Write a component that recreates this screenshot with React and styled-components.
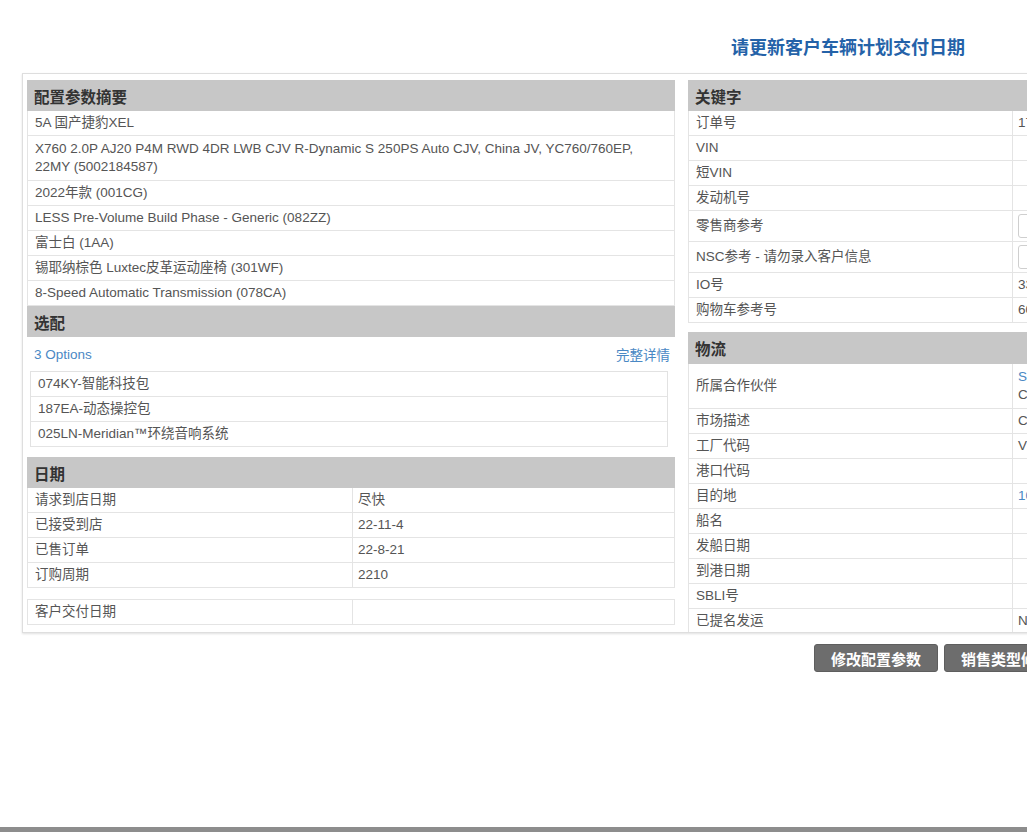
import React from "react";
import styled, { createGlobalStyle } from "styled-components";

const GlobalStyle = createGlobalStyle`
  *, *::before, *::after { box-sizing: border-box; }
  html, body { margin: 0; padding: 0; overflow: hidden; background: #fff; }
  body {
    font-family: "Liberation Sans", "Noto Sans CJK SC", Arial, sans-serif;
    font-size: 13.5px;
    color: #555;
  }
`;

const Page = styled.div`
  width: 1400px;
`;

const Main = styled.div`
  min-height: 827px;
  padding-left: 22px;
`;

const TopBar = styled.div`
  height: 73px;
  width: 943px;
  display: flex;
  justify-content: flex-end;
  align-items: flex-start;
  padding-top: 37px;
`;

const TopLink = styled.a`
  font-size: 18px;
  font-weight: bold;
  line-height: 22px;
  color: #2462a8;
  text-decoration: none;
  cursor: pointer;
`;

const Panel = styled.div`
  width: 1319px;
  height: 560px;
  overflow: hidden;
  border: 1px solid #dedede;
  box-shadow: 0 1px 2px rgba(0, 0, 0, 0.12);
  padding: 6px 4px;
  display: flex;
  align-items: flex-start;
  gap: 13px;
  background: #fff;
`;

const Column = styled.div`
  width: 648px;
  flex-shrink: 0;
  display: flex;
  flex-direction: column;
  & > * {
    flex-shrink: 0;
  }
`;

const SectionHeader = styled.div`
  height: ${(p) => p.$h || 31}px;
  background: #c7c7c7;
  color: #333;
  font-size: 15.5px;
  font-weight: bold;
  display: flex;
  align-items: center;
  padding: 0 7px;
  margin-top: ${(p) => p.$mt || 0}px;
`;

const Table = styled.div`
  border-left: 1px solid #e4e4e4;
  border-right: 1px solid #e4e4e4;
  margin-top: ${(p) => p.$mt || 0}px;
  ${(p) => (p.$boxed ? "border-top: 1px solid #e4e4e4;" : "")}
`;

const Row = styled.div`
  display: flex;
  align-items: center;
  min-height: ${(p) => p.$h || 25}px;
  padding: 0 7px;
  line-height: 18px;
  border-bottom: 1px solid #e4e4e4;
`;

const OptionsBar = styled.div`
  height: 34px;
  display: flex;
  align-items: center;
  justify-content: space-between;
  padding: 0 5px 0 7px;
`;

const LinkText = styled.a`
  color: #4a88c4;
  text-decoration: none;
  cursor: pointer;
`;

const OptionsBox = styled.div`
  margin: 0 7px 0 3px;
  border: 1px solid #e2e2e2;
  border-bottom: none;
`;

const KVRow = styled.div`
  display: grid;
  grid-template-columns: ${(p) => p.$split || 324}px 1fr;
  min-height: ${(p) => p.$h || 25}px;
  border-bottom: 1px solid #e4e4e4;
  line-height: 18px;
`;

const KVLabel = styled.div`
  display: flex;
  align-items: center;
  padding: 0 7px;
  border-right: 1px solid #e4e4e4;
`;

const KVValue = styled.div`
  display: flex;
  flex-direction: column;
  justify-content: center;
  padding: 0 5px;
  white-space: nowrap;
  color: ${(p) => (p.$link ? "#4a88c4" : "#555")};
`;

const InputBox = styled.div`
  width: 160px;
  height: 24px;
  border: 1px solid #cfcfcf;
  border-radius: 3px;
  background: #fff;
`;

const ButtonRow = styled.div`
  display: flex;
  gap: 6px;
  padding-left: 792px;
  margin-top: 11px;
`;

const ActionButton = styled.button`
  height: 28px;
  padding: 0 14px;
  min-width: 124px;
  border: 1px solid #5e5e5e;
  border-radius: 3px;
  background: #6d6d6d;
  color: #fff;
  font-family: "Liberation Sans", "Noto Sans CJK SC", sans-serif;
  font-size: 15px;
  font-weight: bold;
  cursor: pointer;
`;

const Footer = styled.div`
  height: 40px;
  background: #8d8d8d;
  padding: 2px 0 0 140px;
  color: #2a2a2a;
  font-size: 13px;
`;

const summary = [
  { t: "5A 国产捷豹XEL" },
  {
    t: "X760 2.0P AJ20 P4M RWD 4DR LWB CJV R-Dynamic S 250PS Auto CJV, China JV, YC760/760EP, 22MY (5002184587)",
    h: 45,
  },
  { t: "2022年款 (001CG)" },
  { t: "LESS Pre-Volume Build Phase - Generic (082ZZ)" },
  { t: "富士白 (1AA)" },
  { t: "锡耶纳棕色 Luxtec皮革运动座椅 (301WF)" },
  { t: "8-Speed Automatic Transmission (078CA)" },
];

const options = ["074KY-智能科技包", "187EA-动态操控包", "025LN-Meridian™环绕音响系统"];

const dates = [
  ["请求到店日期", "尽快"],
  ["已接受到店", "22-11-4"],
  ["已售订单", "22-8-21"],
  ["订购周期", "2210"],
];

const keywords = [
  { l: "订单号", v: "17284039" },
  { l: "VIN", v: "" },
  { l: "短VIN", v: "" },
  { l: "发动机号", v: "" },
  { l: "零售商参考", input: true, h: 31 },
  { l: "NSC参考 - 请勿录入客户信息", input: true, h: 31 },
  { l: "IO号", v: "3310294" },
  { l: "购物车参考号", v: "6048217" },
];

const logistics = [
  { l: "所属合作伙伴", v: ["SZ10023", "China Dealer"], h: 45, link0: true },
  { l: "市场描述", v: ["China"] },
  { l: "工厂代码", v: ["VC"] },
  { l: "港口代码", v: [""] },
  { l: "目的地", v: ["10023"], link: true },
  { l: "船名", v: [""] },
  { l: "发船日期", v: [""] },
  { l: "到港日期", v: [""] },
  { l: "SBLI号", v: [""] },
  { l: "已提名发运", v: ["No"] },
];

export default function App() {
  return (
    <Page>
      <GlobalStyle />
      <Main>
        <TopBar>
          <TopLink>请更新客户车辆计划交付日期</TopLink>
        </TopBar>
        <Panel>
          <Column>
            <SectionHeader>配置参数摘要</SectionHeader>
            <Table>
              {summary.map((r, i) => (
                <Row key={i} $h={r.h}>
                  {r.t}
                </Row>
              ))}
            </Table>
            <SectionHeader>选配</SectionHeader>
            <OptionsBar>
              <LinkText>3 Options</LinkText>
              <LinkText>完整详情</LinkText>
            </OptionsBar>
            <OptionsBox>
              {options.map((o) => (
                <Row key={o}>{o}</Row>
              ))}
            </OptionsBox>
            <SectionHeader $mt={10}>日期</SectionHeader>
            <Table>
              {dates.map(([l, v]) => (
                <KVRow key={l} $split={325}>
                  <KVLabel>{l}</KVLabel>
                  <KVValue>{v}</KVValue>
                </KVRow>
              ))}
            </Table>
            <Table $mt={11} $boxed>
              <KVRow $split={325}>
                <KVLabel>客户交付日期</KVLabel>
                <KVValue />
              </KVRow>
            </Table>
          </Column>
          <Column>
            <SectionHeader>关键字</SectionHeader>
            <Table>
              {keywords.map((k) => (
                <KVRow key={k.l} $h={k.h}>
                  <KVLabel>{k.l}</KVLabel>
                  <KVValue>{k.input ? <InputBox /> : k.v}</KVValue>
                </KVRow>
              ))}
            </Table>
            <SectionHeader $mt={9} $h={32}>
              物流
            </SectionHeader>
            <Table>
              {logistics.map((k) => (
                <KVRow key={k.l} $h={k.h}>
                  <KVLabel>{k.l}</KVLabel>
                  {k.link0 ? (
                    <KVValue>
                      <LinkText>{k.v[0]}</LinkText>
                      <span>{k.v[1]}</span>
                    </KVValue>
                  ) : (
                    <KVValue $link={k.link}>{k.v[0]}</KVValue>
                  )}
                </KVRow>
              ))}
            </Table>
          </Column>
        </Panel>
        <ButtonRow>
          <ActionButton>修改配置参数</ActionButton>
          <ActionButton>销售类型修改</ActionButton>
          <ActionButton>取消订单</ActionButton>
        </ButtonRow>
      </Main>
      <Footer>版权 © 2018捷豹路虎 版权所有</Footer>
    </Page>
  );
}
